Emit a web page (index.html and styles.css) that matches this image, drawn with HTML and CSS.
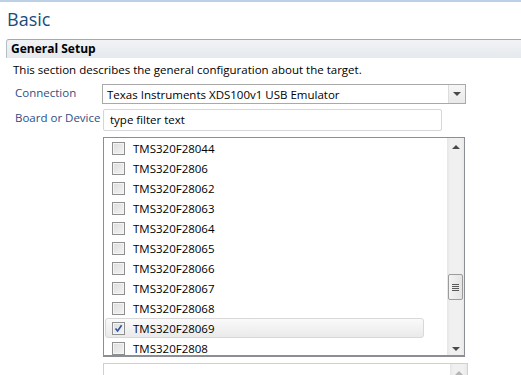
FILE: index.html
```html
<!DOCTYPE html>
<html lang="en">
<head>
    <meta charset="UTF-8">
    <title>Basic</title>
    <link rel="stylesheet" href="styles.css">
</head>
<body>
    <div class="top-line"></div>
    <h1 class="page-title">Basic</h1>

    <div class="section">
        <div class="section-head">General Setup</div>
        <div class="section-desc">This section describes the general configuration about the target.</div>

        <div class="form">
            <label class="form-label">Connection</label>
            <div class="combo">
                <span class="combo-text">Texas Instruments XDS100v1 USB Emulator</span>
                <span class="combo-btn"><span class="tri-down"></span></span>
            </div>

            <label class="form-label">Board or Device</label>
            <div class="filter">type filter text</div>

            <div></div>
            <div class="list">
                <div class="list-items">
                    <div class="item"><span class="chk"></span>TMS320F28044</div>
                    <div class="item"><span class="chk"></span>TMS320F2806</div>
                    <div class="item"><span class="chk"></span>TMS320F28062</div>
                    <div class="item"><span class="chk"></span>TMS320F28063</div>
                    <div class="item"><span class="chk"></span>TMS320F28064</div>
                    <div class="item"><span class="chk"></span>TMS320F28065</div>
                    <div class="item"><span class="chk"></span>TMS320F28066</div>
                    <div class="item"><span class="chk"></span>TMS320F28067</div>
                    <div class="item"><span class="chk"></span>TMS320F28068</div>
                    <div class="item selected"><span class="chk checked">
                        <svg width="9" height="9" viewBox="0 0 9 9"><path d="M1.5 4.5 L3.6 7 L7.6 1.2" fill="none" stroke="#2a4fa0" stroke-width="1.6"/></svg>
                    </span>TMS320F28069</div>
                    <div class="item"><span class="chk"></span>TMS320F2808</div>
                </div>
                <div class="scrollbar">
                    <span class="tri-up"></span>
                    <div class="thumb"><span class="grip"></span></div>
                    <span class="tri-down small"></span>
                </div>
            </div>

            <div></div>
            <div class="list2">
                <div class="scrollbar short"><span class="tri-up light"></span></div>
            </div>
        </div>
    </div>
</body>
</html>
```

FILE: styles.css
```css
body {
    margin: 0;
    height: 375px;
    overflow: hidden;
    background: white;
    font-family: "Open Sans", "Liberation Sans", sans-serif;
    font-size: 11.5px;
    color: #000;
}

.top-line {
    height: 2px;
    background: #bcd0e6;
}

.page-title {
    margin: 0;
    padding: 5px 0 0 7px;
    height: 32px;
    box-sizing: border-box;
    font-weight: normal;
    font-size: 18px;
    color: #1c4b7c;
}

.section {
    margin-left: 6px;
    margin-top: 5px;
}

.section-head {
    height: 17px;
    padding: 1px 0 0 4px;
    border-top: 1px solid #a3a9b3;
    border-left: 1px solid #b9bec6;
    border-top-left-radius: 3px;
    background: linear-gradient(#f1f3f5, #e6e9ed);
    font-weight: bold;
    font-size: 12px;
    line-height: 16px;
}

.section-desc {
    padding: 4px 0 0 7px;
    height: 26px;
    box-sizing: border-box;
}

.form {
    display: grid;
    grid-template-columns: 87px 364px;
    padding-left: 9px;
}

.form-label {
    color: #2d4f86;
    line-height: 18px;
    white-space: nowrap;
}

.combo {
    height: 20px;
    box-sizing: border-box;
    border: 1px solid #a9a9a9;
    display: flex;
    align-items: center;
}

.combo-text {
    flex: 1;
    padding-left: 4px;
}

.combo-btn {
    width: 16px;
    height: 18px;
    border-left: 1px solid #dcdcdc;
    background: linear-gradient(#f6f6f6, #e9e9e9);
    display: flex;
    align-items: center;
    justify-content: center;
}

.tri-down {
    width: 0;
    height: 0;
    border-left: 4px solid transparent;
    border-right: 4px solid transparent;
    border-top: 4px solid #4a4a4a;
}

.tri-up {
    width: 0;
    height: 0;
    border-left: 4px solid transparent;
    border-right: 4px solid transparent;
    border-bottom: 4px solid #4a4a4a;
}

.tri-up.light {
    border-bottom-color: #b5b5b5;
}

.form-label + .filter {
    margin-top: 5px;
}

.filter {
    width: 339px;
    height: 22px;
    margin-left: 1px;
    box-sizing: border-box;
    border: 1px solid #d4d6da;
    border-radius: 2px;
    padding: 2px 0 0 6px;
    line-height: 16px;
}

.form-label:nth-of-type(2) {
    margin-top: 5px;
}

.list {
    width: 362px;
    height: 220px;
    margin: 6px 0 0 1px;
    box-sizing: border-box;
    border: 1px solid #8b8e94;
    border-bottom-width: 2px;
    display: flex;
    overflow: hidden;
}

.list-items {
    flex: 1;
    padding-left: 1px;
}

.item {
    height: 20px;
    display: flex;
    align-items: center;
    padding-left: 7px;
    width: 319px;
    box-sizing: border-box;
}

.item.selected {
    border: 1px solid #d8d8d8;
    border-radius: 3px;
    padding-left: 6px;
    background: linear-gradient(#fafafa, #eaeaea);
}

.chk {
    width: 13px;
    height: 13px;
    box-sizing: border-box;
    border: 1px solid #8e8f8f;
    background: linear-gradient(135deg, #dcdcdc, #f4f4f4);
    box-shadow: inset 0 0 0 1px #f4f4f4;
    margin-right: 8px;
    display: flex;
    align-items: center;
    justify-content: center;
}

.scrollbar {
    width: 17px;
    background: linear-gradient(90deg, #e6e6e6, #f0f0f0 20%, #f0f0f0 80%, #e9e9e9);
    display: flex;
    flex-direction: column;
    align-items: center;
    padding-top: 7px;
    box-sizing: border-box;
}

.thumb {
    width: 15px;
    height: 26px;
    margin-top: 125px;
    box-sizing: border-box;
    border: 1px solid #9b9b9b;
    border-radius: 2px;
    background: linear-gradient(90deg, #f3f3f3, #e4e4e4);
    display: flex;
    align-items: center;
    justify-content: center;
}

.grip {
    width: 7px;
    height: 7px;
    background: repeating-linear-gradient(#5a5a5a 0 1px, transparent 1px 2px);
}

.tri-down.small {
    margin-top: 47px;
}

.list2 {
    width: 363px;
    height: 20px;
    margin: 6px 0 0 1px;
    border: 1px solid #d0d0d0;
    border-bottom: none;
    display: flex;
    justify-content: flex-end;
}

.scrollbar.short {
    height: 20px;
}
```
